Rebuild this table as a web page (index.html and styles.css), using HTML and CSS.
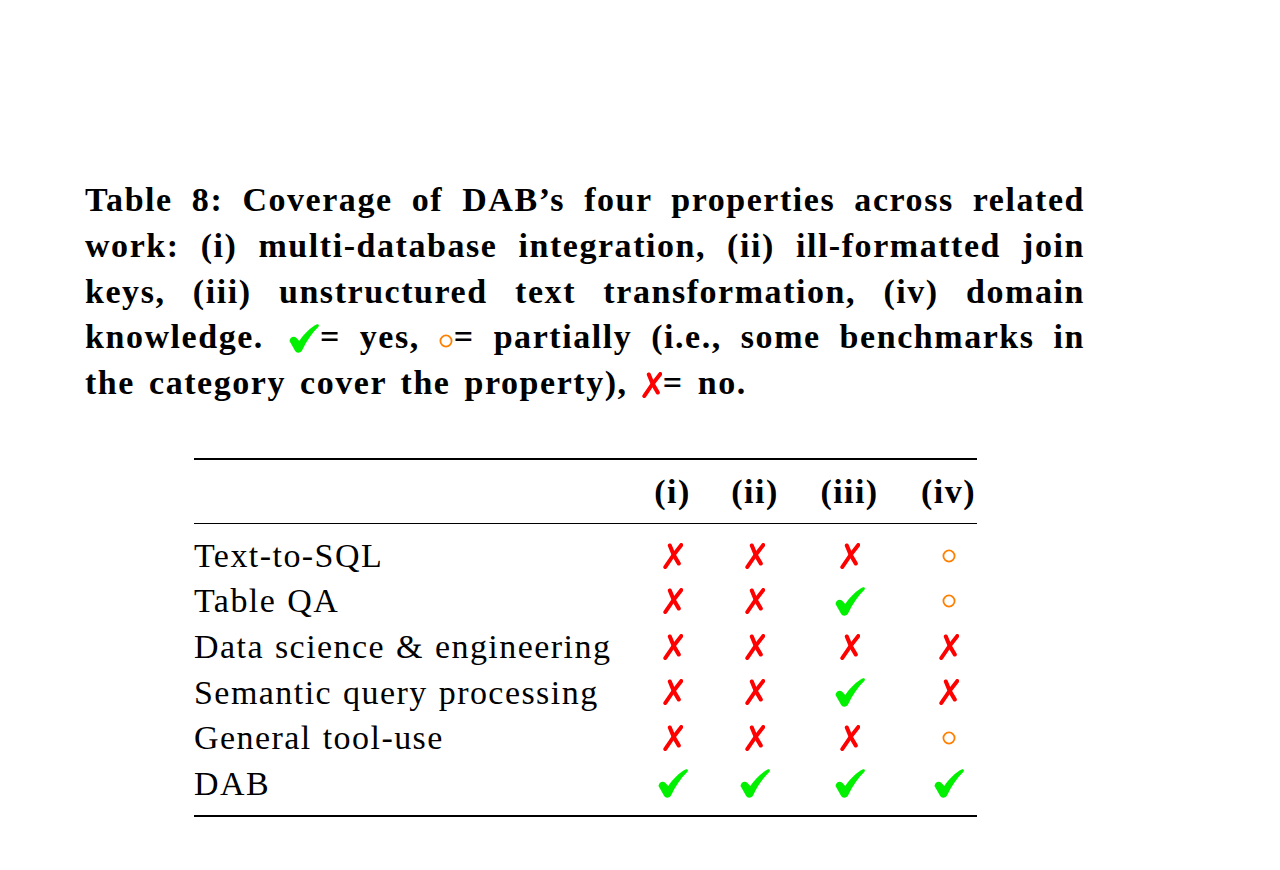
FILE: index.html
```html
<!DOCTYPE html>
<html>
<head>
<meta charset="utf-8">
<link rel="stylesheet" href="styles.css">
</head>
<body>
<div class="page">
  <div class="caption">
    <div class="cl">Table 8: Coverage of DAB’s four properties across related</div>
    <div class="cl">work: (i) multi-database integration, (ii) ill-formatted join</div>
    <div class="cl">keys, (iii) unstructured text transformation, (iv) domain</div>
    <div class="cl">knowledge. <svg class="ck cap-ck" viewBox="0 0 30 29"><path d="M0.5 17 C1 13 5 11.5 7.5 14 L10.3 17 C15 10 21.5 3.5 28 0.3 C29.8 -0.3 30.5 1.8 29.3 3 C23 9 17.5 17 13.3 26 C11.8 29.3 7.5 29.5 6 26.8 C4.3 23.5 2.5 20.5 0.5 17 Z"/></svg>= yes, <svg class="ci cap-ci" viewBox="0 0 14 14"><circle cx="7" cy="7" r="5.6"/></svg>= partially (i.e., some benchmarks in</div>
    <div class="cl last">the category cover the property), <svg class="xx cap-xx" viewBox="0 0 20 26"><path d="M18.3 2 Q10 12 2.3 24"/><path d="M6.8 2.5 Q10 12 15.8 20.5"/></svg>= no.</div>
  </div>

  <div class="tbl">
    <div class="head">
      <div class="lbl"></div>
      <div class="c">(i)</div>
      <div class="c">(ii)</div>
      <div class="c">(iii)</div>
      <div class="c">(iv)</div>
    </div>
    <div class="body" id="body"></div>
  </div>
</div>
<script src="script.js"></script>
</body>
</html>
```

FILE: script.js
```js
const rows = [
  ["Text-to-SQL", "xxxo"],
  ["Table QA", "xxvo"],
  ["Data science & engineering", "xxxx"],
  ["Semantic query processing", "xxvx"],
  ["General tool-use", "xxxo"],
  ["DAB", "vvvv"]
];
const CK = '<svg class="ck" viewBox="0 0 30 29"><path d="M0.5 17 C1 13 5 11.5 7.5 14 L10.3 17 C15 10 21.5 3.5 28 0.3 C29.8 -0.3 30.5 1.8 29.3 3 C23 9 17.5 17 13.3 26 C11.8 29.3 7.5 29.5 6 26.8 C4.3 23.5 2.5 20.5 0.5 17 Z"/></svg>';
const XX = '<svg class="xx" viewBox="0 0 20 26"><path d="M18.3 2 Q10 12 2.3 24"/><path d="M6.8 2.5 Q10 12 15.8 20.5"/></svg>';
const CI = '<svg class="ci" viewBox="0 0 14 14"><circle cx="7" cy="7" r="5.6"/></svg>';
const body = document.getElementById("body");
for (const [name, marks] of rows) {
  const r = document.createElement("div");
  r.className = "row";
  let html = '<div class="lbl"></div>';
  for (const m of marks) {
    html += '<div class="c">' + (m === "x" ? XX : m === "v" ? CK : CI) + '</div>';
  }
  r.innerHTML = html;
  r.firstChild.textContent = name;
  body.appendChild(r);
}
```

FILE: styles.css
```css
html, body {
  margin: 0;
  padding: 0;
  background: #fff;
}
.page {
  width: 1280px;
  height: 870px;
  position: relative;
  font-family: "Liberation Serif", "Times New Roman", serif;
  color: #000;
}
.caption {
  padding-top: 177px;
  margin-left: 85px;
  width: 1000px;
  font-weight: bold;
  font-size: 34px;
  line-height: 45.75px;
  letter-spacing: 1.55px;
  word-spacing: 4px;
}
.cl {
  text-align: justify;
  text-align-last: justify;
  white-space: nowrap;
}
.cl.last {
  text-align: left;
  text-align-last: left;
}
.ck path { fill: #00f000; }
.xx path {
  fill: none;
  stroke: #ff0000;
  stroke-width: 4;
  stroke-linecap: round;
}
.ci circle {
  fill: none;
  stroke: #ff8000;
  stroke-width: 1.8;
}
.ck { width: 30px; height: 29px; }
.xx { width: 20px; height: 26px; }
.ci { width: 14px; height: 14px; }
.cap-ck { vertical-align: -5px; margin-left: 6px; margin-right: 1px; }
.cap-ci { vertical-align: 0px; margin-right: 1px; }
.cap-xx { vertical-align: -4px; margin-right: 1px; }

.tbl {
  margin-top: 52px;
  margin-left: 194px;
  width: 783px;
  border-top: 2px solid #000;
  border-bottom: 2px solid #000;
  font-size: 34px;
  letter-spacing: 1.45px;
  word-spacing: 1px;
}
.head, .row {
  display: grid;
  grid-template-columns: 419px 35px 46px 59px 55px;
  column-gap: 42px;
}
.head {
  height: 63px;
  line-height: 63px;
  font-weight: bold;
  border-bottom: 1.4px solid #000;
}
.body {
  padding: 9px 0 9px;
}
.row {
  height: 45.6px;
  line-height: 45.6px;
}
.lbl {
  white-space: nowrap;
}
.c {
  display: flex;
  align-items: center;
  justify-content: center;
  white-space: nowrap;
}
```
